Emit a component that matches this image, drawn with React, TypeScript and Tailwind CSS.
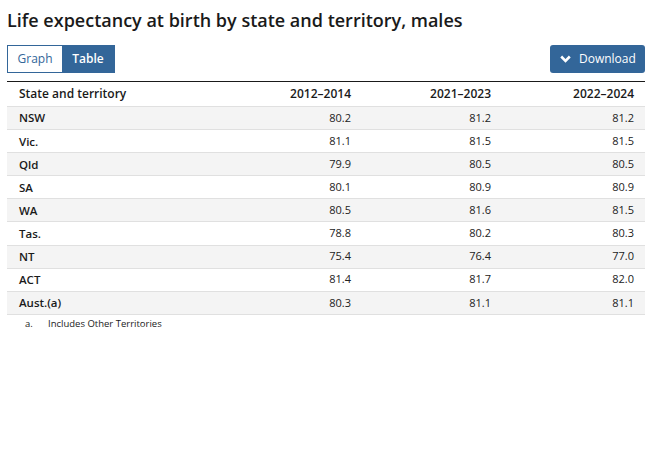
import React from "react";

const rows: [string, string, string, string][] = [
  ["NSW", "80.2", "81.2", "81.2"],
  ["Vic.", "81.1", "81.5", "81.5"],
  ["Qld", "79.9", "80.5", "80.5"],
  ["SA", "80.1", "80.9", "80.9"],
  ["WA", "80.5", "81.6", "81.5"],
  ["Tas.", "78.8", "80.2", "80.3"],
  ["NT", "75.4", "76.4", "77.0"],
  ["ACT", "81.4", "81.7", "82.0"],
  ["Aust.(a)", "80.3", "81.1", "81.1"],
];

export default function App() {
  return (
    <div className="w-[656px] h-[457px] bg-white text-[#1a1a1a]" style={{ fontFamily: '"Open Sans", sans-serif' }}>
      <div className="px-[7px] pt-[8px]">
        <h1 className="text-[18px] leading-[24px] font-semibold text-[#1a1a1a]">
          Life expectancy at birth by state and territory, males
        </h1>
        <div className="mt-[13px] flex items-center justify-between pr-[4px]">
          <div className="flex h-[28px] border border-[#336699]">
            <button className="w-[54px] h-full text-[12px] text-[#336699] bg-white">Graph</button>
            <button className="w-[52px] h-full text-[12px] text-white bg-[#336699] font-semibold">Table</button>
          </div>
          <button className="flex items-center gap-[8px] h-[28px] w-[95px] pl-[10px] rounded-[3px] bg-[#336699] text-white text-[12px]">
            <svg width="11" height="8" viewBox="0 0 11 8">
              <path d="M1.2 1.5 L5.5 5.8 L9.8 1.5" stroke="white" strokeWidth="2.6" fill="none" />
            </svg>
            Download
          </button>
        </div>
        <table className="mt-[8px] w-[638px] border-collapse border-t border-t-[#1a1a1a] text-[11px] text-[#222]">
          <thead>
            <tr className="h-[25px] border-b border-b-[#e0e0e0]">
              <th className="text-left font-semibold text-[12px] pl-[12px] text-[#1a1a1a]">State and territory</th>
              <th className="text-right font-semibold text-[12px] w-[140px] pr-[4px] text-[#1a1a1a]">2012–2014</th>
              <th className="text-right font-semibold text-[12px] w-[140px] pr-[4px] text-[#1a1a1a]">2021–2023</th>
              <th className="text-right font-semibold text-[12px] w-[150px] pr-[11px] text-[#1a1a1a]">2022–2024</th>
            </tr>
          </thead>
          <tbody>
            {rows.map((r, i) => (
              <tr key={r[0]} className={`h-[23.1px] border-b border-b-[#e0e0e0] ${i % 2 === 0 ? "bg-[#f4f4f4]" : "bg-white"}`}>
                <td className="pl-[12px] font-semibold text-[11.5px] text-[#1a1a1a]">{r[0]}</td>
                <td className="text-right pr-[4px]">{r[1]}</td>
                <td className="text-right pr-[4px]">{r[2]}</td>
                <td className="text-right pr-[11px]">{r[3]}</td>
              </tr>
            ))}
          </tbody>
        </table>
        <div className="flex text-[9.5px] mt-[2px] pl-[18px]">
          <span className="w-[23px]">a.</span>
          <span>Includes Other Territories</span>
        </div>
      </div>
    </div>
  );
}
